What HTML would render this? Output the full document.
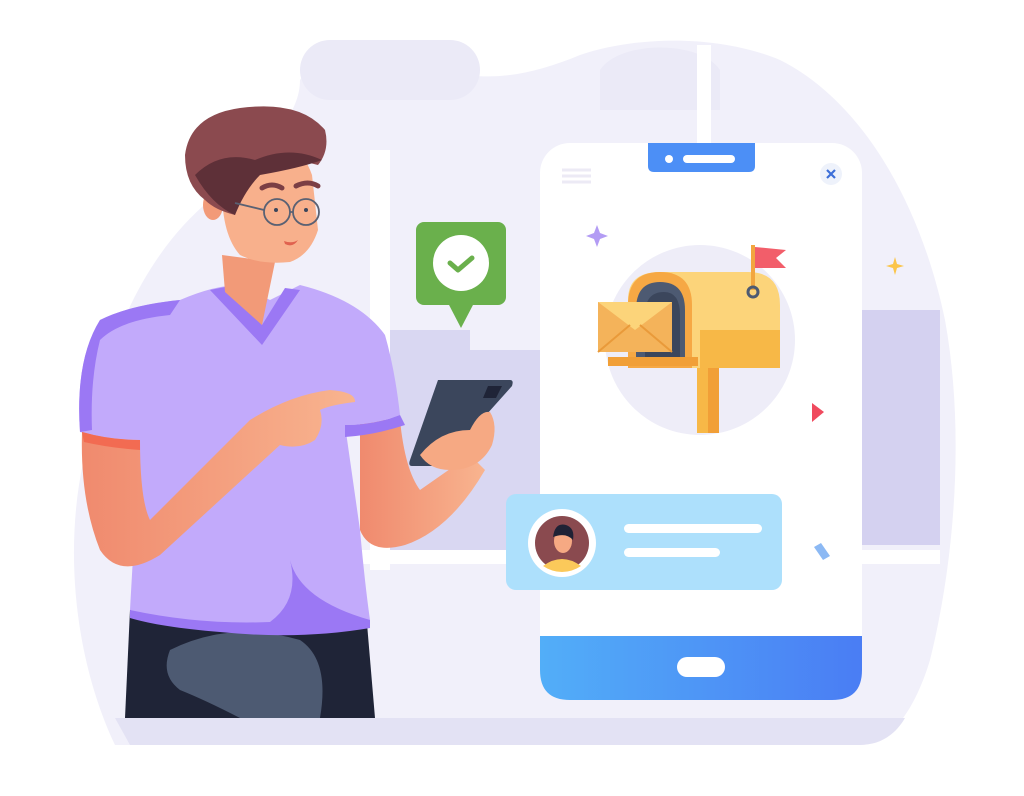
<!DOCTYPE html>
<html><head><meta charset="utf-8"><style>
html,body{margin:0;padding:0;background:#fff;width:1024px;height:796px;overflow:hidden}
svg{display:block}
</style></head><body>
<svg width="1024" height="796" viewBox="0 0 1024 796" xmlns="http://www.w3.org/2000/svg">
<defs>
<linearGradient id="bb" x1="0" x2="1"><stop offset="0" stop-color="#52aef8"/><stop offset="1" stop-color="#4a7df4"/></linearGradient>
<linearGradient id="skin" x1="0" x2="1"><stop offset="0" stop-color="#f08a6e"/><stop offset="1" stop-color="#f8b48f"/></linearGradient>
</defs>
<!-- background blob -->
<path d="M115 745 C70 650 60 520 95 420 C110 330 150 250 210 200 C260 150 300 120 300 80 C320 50 380 45 420 60 C470 85 520 80 580 55 C640 35 720 35 780 60 C860 100 920 200 945 320 C965 430 955 560 930 660 C915 710 890 745 860 745 Z" fill="#f1f0fa"/>
<rect x="300" y="40" width="180" height="60" rx="30" fill="#ebeaf7"/>
<path d="M600 70 C620 40 700 40 720 70 L720 110 L600 110 Z" fill="#ebeaf7"/>
<rect x="697" y="45" width="14" height="100" fill="#fff"/>
<!-- buildings -->
<rect x="390" y="330" width="150" height="220" fill="#d9d7f2"/>
<rect x="470" y="290" width="70" height="60" fill="#f1f0fa"/>
<rect x="862" y="310" width="78" height="235" fill="#d4d1f0"/>
<rect x="370" y="150" width="20" height="420" fill="#fff"/>
<rect x="300" y="550" width="640" height="14" fill="#fff"/>
<!-- bottom strip -->
<path d="M115 718 L905 718 C895 735 880 745 860 745 L130 745 Z" fill="#e3e2f4"/>
<!-- phone -->
<rect x="540" y="143" width="322" height="557" rx="30" fill="#fff"/>
<path d="M540 636 L862 636 L862 670 Q862 700 832 700 L570 700 Q540 700 540 670 Z" fill="url(#bb)"/>
<rect x="677" y="657" width="48" height="20" rx="10" fill="#fff"/>
<path d="M648 143 L755 143 L755 166 Q755 172 749 172 L654 172 Q648 172 648 166 Z" fill="#4c8ff6"/>
<circle cx="669" cy="159" r="4" fill="#fff"/>
<rect x="683" y="155" width="52" height="8" rx="4" fill="#fff"/>
<g stroke="#eceaf5" stroke-width="3"><line x1="562" y1="170" x2="591" y2="170"/><line x1="562" y1="176" x2="591" y2="176"/><line x1="562" y1="182" x2="591" y2="182"/></g>
<circle cx="831" cy="174" r="11" fill="#eef2fb"/>
<path d="M827 170 L835 178 M835 170 L827 178" stroke="#3d6fd8" stroke-width="2.2"/>
<!-- mailbox circle -->
<circle cx="700" cy="340" r="95" fill="#eeedf8"/>
<rect x="697" y="365" width="22" height="68" fill="#f7b847"/>
<rect x="708" y="365" width="11" height="68" fill="#f19f37"/>
<path d="M660 272 L748 272 Q780 272 780 305 L780 368 L628 368 L628 300 Q628 272 660 272 Z" fill="#fcd47a"/>
<rect x="700" y="330" width="80" height="38" fill="#f7b847"/>
<path d="M628 368 L628 305 Q628 272 660 272 Q692 272 692 305 L692 368 Z" fill="#f6a844"/>
<path d="M636 362 L636 310 Q636 282 660 282 Q685 282 685 310 L685 362 Z" fill="#4d5a72"/>
<path d="M645 362 L645 315 Q645 292 664 292 Q680 292 680 315 L680 362 Z" fill="#3b465c"/>
<rect x="608" y="357" width="90" height="9" fill="#f19f37"/>
<rect x="598" y="302" width="74" height="50" fill="#f4b35a"/>
<path d="M598 302 L635 330 L672 302 Z" fill="#fcd47a"/>
<path d="M598 352 L630 325 M672 352 L640 325" stroke="#e99a3a" stroke-width="2"/>
<rect x="751" y="245" width="4" height="45" fill="#f2a640"/>
<path d="M755 247 L786 250 L776 258 L786 268 L755 268 Z" fill="#f25e6a"/>
<circle cx="753" cy="292" r="5" fill="none" stroke="#4d5a72" stroke-width="3"/>
<!-- sparkles -->
<path d="M597 225 L600 233 L608 236 L600 239 L597 247 L594 239 L586 236 L594 233 Z" fill="#b39cf4"/>
<path d="M895 257 L897 264 L904 266 L897 268 L895 275 L893 268 L886 266 L893 264 Z" fill="#fbc54a"/>
<path d="M812 403 L824 412 L812 422 Z" fill="#f04a5e"/>
<path d="M814 547 L821 543 L830 556 L823 560 Z" fill="#8cb9f4"/>
<!-- notification -->
<rect x="506" y="494" width="276" height="96" rx="10" fill="#ade0fc"/>
<circle cx="562" cy="543" r="34" fill="#fff"/>
<circle cx="562" cy="543" r="27" fill="#8a4a4f"/>
<path d="M543 566 Q562 552 581 566 Q572 572 562 572 Q552 572 543 566 Z" fill="#fbc95a"/>
<ellipse cx="563" cy="541" rx="9" ry="12" fill="#f6a983"/>
<path d="M553 537 Q555 522 566 525 Q575 528 573 540 Q566 532 553 537 Z" fill="#1f2235"/>
<rect x="624" y="524" width="138" height="9" rx="4.5" fill="#fff"/>
<rect x="624" y="548" width="96" height="9" rx="4.5" fill="#fff"/>
<!-- green bubble -->
<rect x="416" y="222" width="90" height="83" rx="8" fill="#6ab04c"/>
<path d="M448 303 L461 328 L474 303 Z" fill="#6ab04c"/>
<circle cx="461" cy="263" r="28" fill="#fff"/>
<path d="M450 263 L458 270 L472 258" stroke="#6ab04c" stroke-width="5" fill="none" stroke-linecap="round" stroke-linejoin="round"/>
<!-- man: pants -->
<path d="M130 610 L365 600 L375 718 L125 718 Z" fill="#1f2437"/>
<path d="M170 650 Q230 620 300 640 Q330 660 320 718 L240 718 Q205 700 180 690 Q160 675 170 650 Z" fill="#4d5a72"/>
<!-- arms back (right arm) -->
<path d="M360 420 L400 420 Q405 470 420 490 L470 455 L485 470 Q450 530 405 545 Q370 555 360 530 Z" fill="url(#skin)"/>
<!-- shirt -->
<path d="M180 300 Q215 285 240 285 L270 300 L300 285 Q360 300 385 335 Q395 370 400 415 Q375 425 345 425 L360 530 Q365 585 370 620 Q300 640 220 630 Q160 625 130 610 Q135 520 140 440 Q110 440 80 432 Q75 360 100 320 Q130 305 180 300 Z" fill="#c2aafb"/>
<path d="M80 432 Q75 360 100 320 Q130 305 180 300 L170 315 Q120 320 100 340 Q90 380 92 430 Z" fill="#9b78f4"/>
<path d="M210 290 L262 345 L300 290 L285 288 L262 325 L225 287 Z" fill="#9b78f4"/>
<path d="M345 425 Q375 425 400 415 L405 425 Q375 435 345 437 Z" fill="#9b78f4"/>
<path d="M130 610 Q200 625 270 622 Q300 600 290 560 Q300 600 370 620 L370 628 Q300 640 220 632 Q160 627 130 618 Z" fill="#9b78f4"/>
<!-- neck -->
<path d="M222 255 L275 262 L262 325 L225 292 Z" fill="#f29a78"/>
<!-- left arm -->
<path d="M82 432 Q110 440 140 440 Q140 500 150 520 Q200 470 250 420 Q290 395 330 390 Q356 392 355 402 Q330 405 320 410 Q325 425 315 440 Q300 450 280 445 Q220 500 160 555 Q120 580 100 550 Q80 500 82 432 Z" fill="url(#skin)"/>
<path d="M82 432 Q110 440 140 440 L140 450 Q110 448 84 442 Z" fill="#f26b52"/>
<!-- phone in hand -->
<path d="M438 380 L510 380 Q514 380 512 386 L444 462 Q440 466 434 466 L412 466 Q408 466 410 460 Z" fill="#3b465c"/>
<path d="M488 386 L502 386 L496 398 L483 398 Z" fill="#1f2437"/>
<path d="M420 455 Q440 430 470 430 Q480 410 490 412 Q498 425 492 445 Q480 470 450 470 Q430 470 420 455 Z" fill="#f6a983"/>
<!-- head -->
<path d="M222 190 Q220 140 260 135 Q300 140 312 175 L318 230 Q310 255 290 262 Q260 265 240 255 Q222 235 222 190 Z" fill="#f8b08c"/>
<ellipse cx="213" cy="205" rx="10" ry="15" fill="#f29a78"/>
<path d="M185 155 Q190 115 240 108 Q300 100 325 130 Q330 150 318 165 Q280 155 250 170 Q240 190 235 215 Q215 210 205 200 Q185 185 185 155 Z" fill="#8b4a4f"/>
<path d="M195 175 Q220 150 255 160 Q290 145 322 160 Q300 168 260 175 Q245 190 235 215 Q212 205 195 175 Z" fill="#5e3038"/>
<path d="M262 188 Q272 182 282 188 M296 186 Q308 180 318 186" stroke="#7b3e44" stroke-width="5" fill="none" stroke-linecap="round"/>
<circle cx="277" cy="212" r="13" fill="none" stroke="#5a6173" stroke-width="1.8"/>
<circle cx="306" cy="212" r="13" fill="none" stroke="#5a6173" stroke-width="1.8"/>
<path d="M235 203 L264 210 M290 212 L293 212" stroke="#5a6173" stroke-width="1.8"/>
<circle cx="276" cy="210" r="2" fill="#3b465c"/><circle cx="306" cy="210" r="2" fill="#3b465c"/>
<path d="M284 241 Q292 244 298 240 Q293 248 285 244 Z" fill="#e0624f"/>
</svg>
</body></html>
